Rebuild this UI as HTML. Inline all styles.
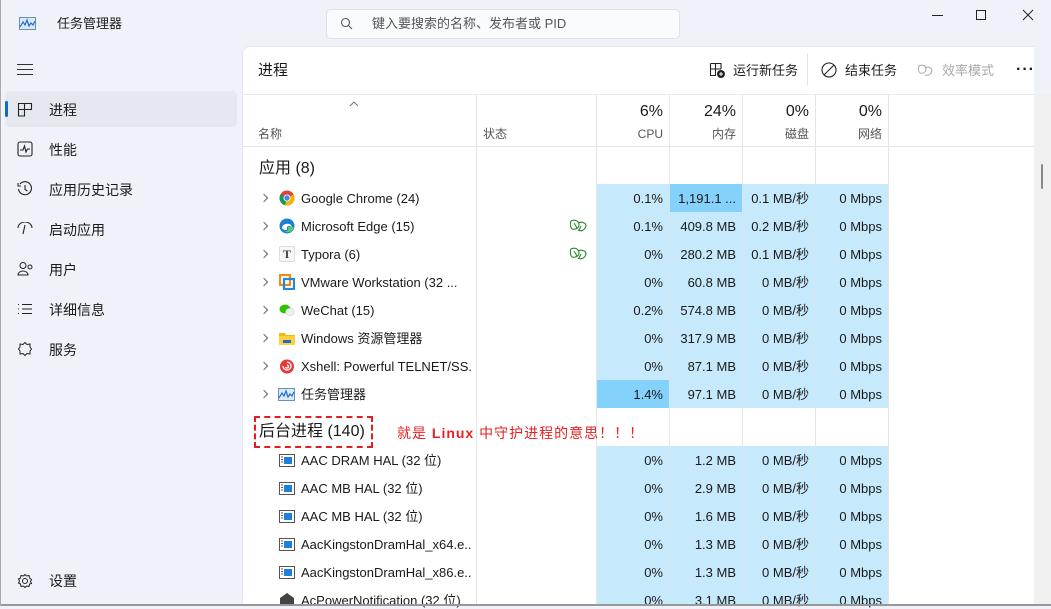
<!DOCTYPE html>
<html><head><meta charset="utf-8">
<style>
*{margin:0;padding:0;box-sizing:border-box}
body{width:1051px;height:606px;overflow:hidden;background:#eff3f9;font-family:"Liberation Sans","Noto Sans CJK SC",sans-serif;color:#1a1a1a;position:relative;font-size:13px;line-height:16px}
.a{position:absolute;white-space:nowrap;line-height:16px}
.nav{position:absolute;left:49px;font-size:14px;line-height:18px}
.ic{position:absolute;left:17px}
.panel{position:absolute;left:242px;top:46px;width:792px;height:560px;background:#fff;border-top-left-radius:8px;border-left:1px solid #e3e6ea;border-top:1px solid #e3e6ea}
.vl{position:absolute;top:95px;width:1px;background:#e6e6e6;height:511px}
.blue{position:absolute;left:597px;width:291px;background:#c6e9fc}
.num{position:absolute;text-align:right;font-size:13px;line-height:16px;white-space:nowrap}
.nm{position:absolute;left:301px;font-size:13px;line-height:16px;white-space:nowrap;max-width:170px;overflow:hidden}
.chev{position:absolute;left:261px;width:6px;height:6px;border-right:1.3px solid #666;border-top:1.3px solid #666;transform:rotate(45deg)}
</style></head><body>
<svg class="a" style="left:19px;top:17px" width="17" height="13" viewBox="0 0 17 13"><rect x="0.5" y="0.5" width="16" height="12" fill="#dbe9f8" stroke="#6b8fb8"/><path d="M1 10 L4 5 L6 8 L8 3 L10 9 L12 6 L14 8 L16 4" stroke="#1e6fd0" fill="none" stroke-width="1.2"/></svg>
<div class="a" style="left:57px;top:16px;font-size:13px">任务管理器</div>
<div class="a" style="left:326px;top:9px;width:354px;height:30px;background:#fafbfd;border:1px solid #dde1e6;border-radius:5px"></div>
<svg class="a" style="left:340px;top:17px" width="13" height="13" viewBox="0 0 13 13"><circle cx="5.5" cy="5.5" r="4" stroke="#555" fill="none" stroke-width="1.1"/><path d="M8.5 8.5 L12 12" stroke="#555" stroke-width="1.1"/></svg>
<div class="a" style="left:372px;top:16px;font-size:13px;color:#555">键入要搜索的名称、发布者或 PID</div>
<div class="a" style="left:932px;top:15px;width:11px;height:1px;background:#222"></div>
<div class="a" style="left:976px;top:10px;width:10px;height:10px;border:1px solid #222"></div>
<svg class="a" style="left:1022px;top:9px" width="12" height="12"><path d="M1 1L11 11M11 1L1 11" stroke="#222" stroke-width="1"/></svg>
<div class="a" style="left:17px;top:64px;width:16px;height:1px;background:#333;box-shadow:0 5px 0 #333,0 10px 0 #333"></div>
<div class="a" style="left:5px;top:91px;width:232px;height:36px;background:#e5e9ef;border-radius:5px"></div>
<div class="a" style="left:5px;top:101px;width:3px;height:16px;background:#0f6cbd;border-radius:2px"></div>
<svg class="ic" style="top:102px" width="16" height="15"><path d="M1.5 1.5H14.5V7.5H7.5V14H1.5Z M7.5 1.5V7.5 M1.5 7.5H7.5" stroke="#222" fill="none" stroke-width="1.1"/></svg>
<div class="nav" style="top:101px">进程</div>
<svg class="ic" style="top:141px" width="16" height="16"><rect x="1" y="1" width="14" height="14" rx="2" stroke="#222" fill="none" stroke-width="1.1"/><path d="M3 9H6L7.5 5L9 11L10.5 8H13" stroke="#222" fill="none" stroke-width="1.1"/></svg>
<div class="nav" style="top:141px">性能</div>
<svg class="ic" style="top:181px" width="16" height="16"><path d="M3 3A6.5 6.5 0 1 1 1.5 8" stroke="#222" fill="none" stroke-width="1.1"/><path d="M1 2V5H4 M8 4V8.5L10.5 10" stroke="#222" fill="none" stroke-width="1.1"/></svg>
<div class="nav" style="top:181px">应用历史记录</div>
<svg class="ic" style="top:222px" width="16" height="14"><path d="M1 6A7 6 0 0 1 15 6 M8 3L6 12" stroke="#222" fill="none" stroke-width="1.1"/></svg>
<div class="nav" style="top:221px">启动应用</div>
<svg class="ic" style="top:261px" width="17" height="16"><circle cx="6" cy="4.5" r="3" stroke="#222" fill="none"/><path d="M1 14A5 4 0 0 1 11 14Z" stroke="#222" fill="none"/><circle cx="13" cy="6" r="2" stroke="#222" fill="none"/></svg>
<div class="nav" style="top:261px">用户</div>
<svg class="ic" style="top:303px" width="16" height="12"><path d="M1 1.5H2 M1 6H2 M1 10.5H2 M5 1.5H15 M5 6H15 M5 10.5H15" stroke="#222" stroke-width="1.1"/></svg>
<div class="nav" style="top:301px">详细信息</div>
<svg class="ic" style="top:341px" width="16" height="16"><path d="M8 1.5L10 3.5L13 3L13 6L14.5 8L13 10L13 13L10 12.5L8 14.5L6 12.5L3 13L3 10L1.5 8L3 6L3 3L6 3.5Z" stroke="#222" fill="none"/></svg>
<div class="nav" style="top:341px">服务</div>
<svg class="ic" style="top:573px" width="16" height="16"><circle cx="8" cy="8" r="2.5" stroke="#222" fill="none"/><path d="M8 1.5L9.5 3L12 2.5L12.5 5L14.5 6.5L13.5 8.5L14.5 10.5L12.5 11L12 13.5L9.5 13L8 14.5L6.5 13L4 13.5L3.5 11L1.5 10L2.5 8L1.5 6L3.5 5L4 2.5L6.5 3Z" stroke="#222" fill="none"/></svg>
<div class="nav" style="top:572px">设置</div>
<div class="panel"></div>
<div class="a" style="left:1034px;top:94px;width:17px;height:512px;background:#f0f0f0"></div>
<div class="a" style="left:1041px;top:164px;width:2px;height:25px;background:#888;border-radius:1px"></div>
<div class="a" style="left:258px;top:62px;font-size:15px;line-height:18px">进程</div>
<svg class="a" style="left:709px;top:62px" width="17" height="17"><path d="M1.5 1.5H12V7 M1.5 1.5V13.5H7 M1.5 7H12 M6.5 1.5V13.5" stroke="#222" fill="none" stroke-width="1.1"/><circle cx="12" cy="12" r="4" fill="#222"/><path d="M12 10V14M10 12H14" stroke="#fff"/></svg>
<div class="a" style="left:733px;top:63px">运行新任务</div>
<div class="a" style="left:807px;top:54px;width:1px;height:32px;background:#e5e5e5"></div>
<svg class="a" style="left:821px;top:62px" width="16" height="16"><circle cx="8" cy="8" r="7" stroke="#222" fill="none" stroke-width="1.1"/><path d="M3 13L13 3" stroke="#222" stroke-width="1.1"/></svg>
<div class="a" style="left:845px;top:63px">结束任务</div>
<svg class="a" style="left:917px;top:63px" width="17" height="15"><path d="M2 3C6 1 9 3 9 6C9 9 6 11 3 10C1 8 1 5 2 3Z M8 5C12 3 15 5 15 8C14 12 10 13 8 12" stroke="#aaa" fill="none"/></svg>
<div class="a" style="left:942px;top:63px;color:#a8a8a8">效率模式</div>
<div class="a" style="left:1016px;top:62px;font-size:16px;letter-spacing:1px;font-weight:bold">···</div>
<div class="a" style="left:242px;top:94px;width:792px;height:1px;background:#e8e8e8"></div>
<div class="vl" style="left:476px"></div><div class="vl" style="left:596px"></div><div class="vl" style="left:669px"></div><div class="vl" style="left:742px"></div><div class="vl" style="left:815px"></div><div class="vl" style="left:888px"></div>
<div class="a" style="left:242px;top:146px;width:792px;height:1px;background:#e6e6e6"></div>
<svg class="a" style="left:349px;top:101px" width="10" height="6"><path d="M1 5L5 1L9 5" stroke="#777" fill="none"/></svg>
<div class="a" style="left:258px;top:126px;font-size:12px;color:#555">名称</div>
<div class="a" style="left:483px;top:126px;font-size:12px;color:#555">状态</div>
<div class="num" style="left:597px;width:66px;top:103px;font-size:16px;line-height:18px">6%</div>
<div class="num" style="left:597px;width:66px;top:126px;font-size:12px;color:#555">CPU</div>
<div class="num" style="left:670px;width:66px;top:103px;font-size:16px;line-height:18px">24%</div>
<div class="num" style="left:670px;width:66px;top:126px;font-size:12px;color:#555">内存</div>
<div class="num" style="left:743px;width:66px;top:103px;font-size:16px;line-height:18px">0%</div>
<div class="num" style="left:743px;width:66px;top:126px;font-size:12px;color:#555">磁盘</div>
<div class="num" style="left:816px;width:66px;top:103px;font-size:16px;line-height:18px">0%</div>
<div class="num" style="left:816px;width:66px;top:126px;font-size:12px;color:#555">网络</div>
<div class="blue" style="top:184px;height:224px"></div>
<div class="blue" style="top:446px;height:160px"></div>
<div class="a" style="left:670px;top:184px;width:72px;height:28px;background:#84d1fb"></div>
<div class="a" style="left:597px;top:380px;width:72px;height:28px;background:#84d1fb"></div>
<div class="vl" style="left:669px;background:#d5e5ee;top:184px;height:224px"></div><div class="vl" style="left:742px;background:#d5e5ee;top:184px;height:224px"></div><div class="vl" style="left:815px;background:#d5e5ee;top:184px;height:224px"></div>
<div class="vl" style="left:669px;background:#d5e5ee;top:446px;height:160px"></div><div class="vl" style="left:742px;background:#d5e5ee;top:446px;height:160px"></div><div class="vl" style="left:815px;background:#d5e5ee;top:446px;height:160px"></div>
<div class="a" style="left:259px;top:159px;font-size:16px;line-height:19px">应用 (8)</div>
<div class="chev" style="top:195px"></div><div class="chev" style="top:223px"></div><div class="chev" style="top:251px"></div><div class="chev" style="top:279px"></div><div class="chev" style="top:307px"></div><div class="chev" style="top:335px"></div><div class="chev" style="top:363px"></div><div class="chev" style="top:391px"></div>
<svg class="a" style="left:279px;top:190px" width="16" height="16"><circle cx="8" cy="8" r="7.5" fill="#db4437"/><path d="M8 8L1.5 4.5A7.5 7.5 0 0 0 6 15.3Z" fill="#0f9d58"/><path d="M8 8L6 15.3A7.5 7.5 0 0 0 15.5 8L14.5 4.5Z" fill="#f4b400"/><circle cx="8" cy="8" r="3.5" fill="#fff"/><circle cx="8" cy="8" r="2.7" fill="#4285f4"/></svg>
<svg class="a" style="left:279px;top:218px" width="16" height="16"><circle cx="8" cy="8" r="7.5" fill="#1b7fd3"/><path d="M3 10C3 5 12 4 13 9C10 7 7 8 8 12C5 12 3 11 3 10Z" fill="#fff"/><path d="M9 9C11 8 15 9 15 10C13 15 7 15 5 13C8 14 10 12 9 9Z" fill="#4fcf6a"/></svg>
<div class="a" style="left:279px;top:246px;width:16px;height:16px;border:1px solid #ddd;border-radius:2px;background:#f7f7f7;font-family:'Liberation Serif',serif;font-size:12px;text-align:center;line-height:14px;font-weight:bold;color:#444">T</div>
<svg class="a" style="left:279px;top:274px" width="16" height="16"><rect x="1" y="1" width="10" height="10" fill="none" stroke="#f28a17" stroke-width="2.2"/><rect x="5" y="5" width="10" height="10" fill="none" stroke="#1d8bd9" stroke-width="2.2"/></svg>
<svg class="a" style="left:279px;top:302px" width="16" height="16"><ellipse cx="6" cy="7" rx="5.5" ry="4.5" fill="#2dc100"/><ellipse cx="11" cy="10" rx="4.5" ry="3.7" fill="#eee" stroke="#ccc" stroke-width=".5"/></svg>
<svg class="a" style="left:279px;top:330px" width="16" height="16"><path d="M0 3H6L7 5H16V15H0Z" fill="#f2b90c"/><rect x="0" y="6" width="16" height="9" fill="#ffcf40"/><rect x="4" y="10" width="8" height="3" fill="#1d6fc9"/></svg>
<svg class="a" style="left:279px;top:358px" width="16" height="16"><circle cx="8" cy="8.5" r="7" fill="#e53935"/><path d="M8 4A4 4 0 1 1 4 8M8 7A1.5 1.5 0 1 1 6.5 9" stroke="#fff" fill="none" stroke-width="1.3"/></svg>
<svg class="a" style="left:278px;top:388px" width="17" height="13" viewBox="0 0 17 13"><rect x="0.5" y="0.5" width="16" height="12" fill="#dbe9f8" stroke="#6b8fb8"/><path d="M1 10 L4 5 L6 8 L8 3 L10 9 L12 6 L14 8 L16 4" stroke="#1e6fd0" fill="none" stroke-width="1.2"/></svg>
<div class="nm" style="top:191px">Google Chrome (24)</div>
<div class="nm" style="top:219px">Microsoft Edge (15)</div>
<div class="nm" style="top:247px">Typora (6)</div>
<div class="nm" style="top:275px">VMware Workstation (32 ...</div>
<div class="nm" style="top:303px">WeChat (15)</div>
<div class="nm" style="top:331px">Windows 资源管理器</div>
<div class="nm" style="top:359px">Xshell: Powerful TELNET/SS...</div>
<div class="nm" style="top:387px">任务管理器</div>
<svg class="a" style="left:570px;top:219px" width="17" height="14"><path d="M1 2C5 0 9 2 9 6C9 9 5 11 2 10C0 8 0 4 1 2Z M8 4C12 2 16 4 16 7C15 11 11 13 8 11 M4 4L7 9 M11 7L9 11" stroke="#2a8a2a" fill="none" stroke-width="1.1"/></svg>
<svg class="a" style="left:570px;top:247px" width="17" height="14"><path d="M1 2C5 0 9 2 9 6C9 9 5 11 2 10C0 8 0 4 1 2Z M8 4C12 2 16 4 16 7C15 11 11 13 8 11 M4 4L7 9 M11 7L9 11" stroke="#2a8a2a" fill="none" stroke-width="1.1"/></svg>
<div class="num" style="left:597px;width:66px;top:191px">0.1%</div><div class="num" style="left:670px;width:66px;top:191px">1,191.1 ...</div><div class="num" style="left:743px;width:66px;top:191px">0.1 MB/秒</div><div class="num" style="left:816px;width:66px;top:191px">0 Mbps</div>
<div class="num" style="left:597px;width:66px;top:219px">0.1%</div><div class="num" style="left:670px;width:66px;top:219px">409.8 MB</div><div class="num" style="left:743px;width:66px;top:219px">0.2 MB/秒</div><div class="num" style="left:816px;width:66px;top:219px">0 Mbps</div>
<div class="num" style="left:597px;width:66px;top:247px">0%</div><div class="num" style="left:670px;width:66px;top:247px">280.2 MB</div><div class="num" style="left:743px;width:66px;top:247px">0.1 MB/秒</div><div class="num" style="left:816px;width:66px;top:247px">0 Mbps</div>
<div class="num" style="left:597px;width:66px;top:275px">0%</div><div class="num" style="left:670px;width:66px;top:275px">60.8 MB</div><div class="num" style="left:743px;width:66px;top:275px">0 MB/秒</div><div class="num" style="left:816px;width:66px;top:275px">0 Mbps</div>
<div class="num" style="left:597px;width:66px;top:303px">0.2%</div><div class="num" style="left:670px;width:66px;top:303px">574.8 MB</div><div class="num" style="left:743px;width:66px;top:303px">0 MB/秒</div><div class="num" style="left:816px;width:66px;top:303px">0 Mbps</div>
<div class="num" style="left:597px;width:66px;top:331px">0%</div><div class="num" style="left:670px;width:66px;top:331px">317.9 MB</div><div class="num" style="left:743px;width:66px;top:331px">0 MB/秒</div><div class="num" style="left:816px;width:66px;top:331px">0 Mbps</div>
<div class="num" style="left:597px;width:66px;top:359px">0%</div><div class="num" style="left:670px;width:66px;top:359px">87.1 MB</div><div class="num" style="left:743px;width:66px;top:359px">0 MB/秒</div><div class="num" style="left:816px;width:66px;top:359px">0 Mbps</div>
<div class="num" style="left:597px;width:66px;top:387px">1.4%</div><div class="num" style="left:670px;width:66px;top:387px">97.1 MB</div><div class="num" style="left:743px;width:66px;top:387px">0 MB/秒</div><div class="num" style="left:816px;width:66px;top:387px">0 Mbps</div>
<div class="a" style="left:254px;top:416px;width:119px;height:32px;border:2px dashed #e02020"></div>
<div class="a" style="left:259px;top:422px;font-size:16px;line-height:19px">后台进程 (140)</div>
<div class="a" style="left:397px;top:425px;font-size:14px;line-height:17px;color:#e82020;letter-spacing:1px">就是 <b>Linux</b> 中守护进程的意思！！！</div>
<svg class="a" style="left:279px;top:454px" width="16" height="13"><rect x=".5" y=".5" width="15" height="12" fill="#fff" stroke="#555"/><rect x="5" y="3" width="8" height="7" fill="#1d7fd9"/><path d="M2 3H4M2 5.5H4M2 8H4" stroke="#555"/></svg>
<svg class="a" style="left:279px;top:482px" width="16" height="13"><rect x=".5" y=".5" width="15" height="12" fill="#fff" stroke="#555"/><rect x="5" y="3" width="8" height="7" fill="#1d7fd9"/><path d="M2 3H4M2 5.5H4M2 8H4" stroke="#555"/></svg>
<svg class="a" style="left:279px;top:510px" width="16" height="13"><rect x=".5" y=".5" width="15" height="12" fill="#fff" stroke="#555"/><rect x="5" y="3" width="8" height="7" fill="#1d7fd9"/><path d="M2 3H4M2 5.5H4M2 8H4" stroke="#555"/></svg>
<svg class="a" style="left:279px;top:538px" width="16" height="13"><rect x=".5" y=".5" width="15" height="12" fill="#fff" stroke="#555"/><rect x="5" y="3" width="8" height="7" fill="#1d7fd9"/><path d="M2 3H4M2 5.5H4M2 8H4" stroke="#555"/></svg>
<svg class="a" style="left:279px;top:566px" width="16" height="13"><rect x=".5" y=".5" width="15" height="12" fill="#fff" stroke="#555"/><rect x="5" y="3" width="8" height="7" fill="#1d7fd9"/><path d="M2 3H4M2 5.5H4M2 8H4" stroke="#555"/></svg>
<svg class="a" style="left:279px;top:593px" width="16" height="13"><path d="M8 0L15 5V13H1V5Z" fill="#444"/></svg>
<div class="nm" style="top:453px">AAC DRAM HAL (32 位)</div>
<div class="nm" style="top:481px">AAC MB HAL (32 位)</div>
<div class="nm" style="top:509px">AAC MB HAL (32 位)</div>
<div class="nm" style="top:537px">AacKingstonDramHal_x64.e...</div>
<div class="nm" style="top:565px">AacKingstonDramHal_x86.e...</div>
<div class="nm" style="top:593px">AcPowerNotification (32 位)</div>
<div class="num" style="left:597px;width:66px;top:453px">0%</div><div class="num" style="left:670px;width:66px;top:453px">1.2 MB</div><div class="num" style="left:743px;width:66px;top:453px">0 MB/秒</div><div class="num" style="left:816px;width:66px;top:453px">0 Mbps</div>
<div class="num" style="left:597px;width:66px;top:481px">0%</div><div class="num" style="left:670px;width:66px;top:481px">2.9 MB</div><div class="num" style="left:743px;width:66px;top:481px">0 MB/秒</div><div class="num" style="left:816px;width:66px;top:481px">0 Mbps</div>
<div class="num" style="left:597px;width:66px;top:509px">0%</div><div class="num" style="left:670px;width:66px;top:509px">1.6 MB</div><div class="num" style="left:743px;width:66px;top:509px">0 MB/秒</div><div class="num" style="left:816px;width:66px;top:509px">0 Mbps</div>
<div class="num" style="left:597px;width:66px;top:537px">0%</div><div class="num" style="left:670px;width:66px;top:537px">1.3 MB</div><div class="num" style="left:743px;width:66px;top:537px">0 MB/秒</div><div class="num" style="left:816px;width:66px;top:537px">0 Mbps</div>
<div class="num" style="left:597px;width:66px;top:565px">0%</div><div class="num" style="left:670px;width:66px;top:565px">1.3 MB</div><div class="num" style="left:743px;width:66px;top:565px">0 MB/秒</div><div class="num" style="left:816px;width:66px;top:565px">0 Mbps</div>
<div class="num" style="left:597px;width:66px;top:593px">0%</div><div class="num" style="left:670px;width:66px;top:593px">3.1 MB</div><div class="num" style="left:743px;width:66px;top:593px">0 MB/秒</div><div class="num" style="left:816px;width:66px;top:593px">0 Mbps</div>
<div class="a" style="left:0;top:604px;width:1051px;height:2px;background:#999"></div>
<div class="a" style="left:0;top:0;width:1px;height:606px;background:#aaa"></div>
</body></html>
